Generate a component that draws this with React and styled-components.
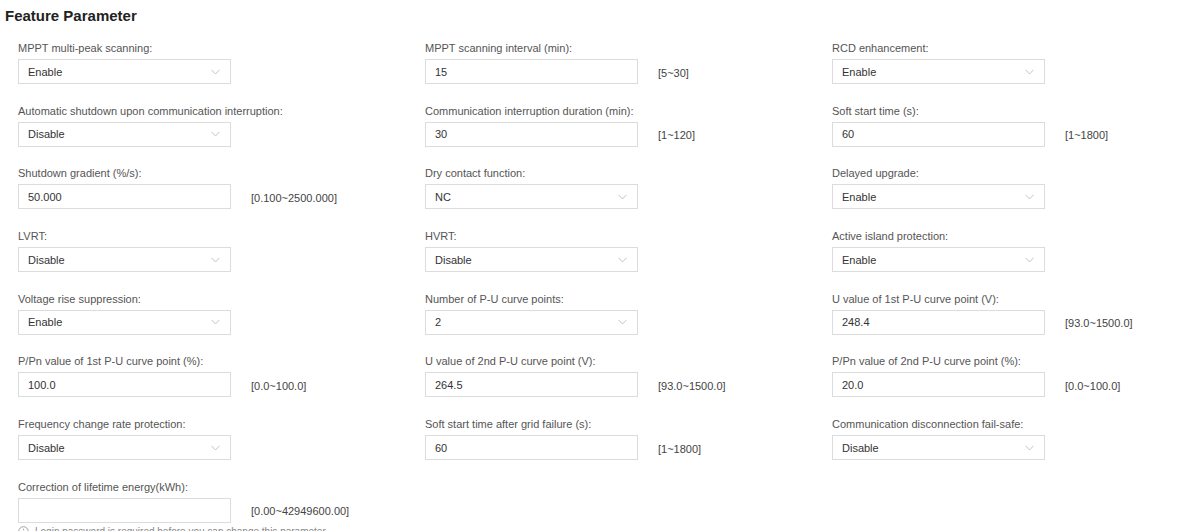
import React from 'react';
import styled, { createGlobalStyle } from 'styled-components';

const GlobalStyle = createGlobalStyle`
  html, body {
    margin: 0;
    padding: 0;
    background: #fff;
    font-family: "Liberation Sans", Arial, sans-serif;
    color: #333;
    overflow: hidden;
  }
`;

const Page = styled.div`
  width: 1200px;
  height: 531px;
  overflow: hidden;
`;

const Title = styled.h2`
  margin: 0;
  padding: 6px 0 0 5px;
  font-size: 15px;
  line-height: 19px;
  font-weight: bold;
  color: #222;
`;

const Grid = styled.div`
  display: grid;
  grid-template-columns: repeat(3, 407px);
  padding: 16px 0 0 18px;
`;

const Field = styled.div`
  display: flex;
  flex-direction: column;
  height: 62.7px;
`;

const Label = styled.div`
  font-size: 11px;
  line-height: 14px;
  color: #555;
  margin-bottom: 4px;
`;

const Row = styled.div`
  display: flex;
  align-items: center;
  gap: 20px;
`;

const Box = styled.div`
  box-sizing: border-box;
  width: 213px;
  height: 25px;
  border: 1px solid #dcdcdc;
  display: flex;
  align-items: center;
  justify-content: space-between;
  padding: 0 10px 0 9px;
  font-size: 11px;
  color: #333;
  background: #fff;
`;

const Range = styled.span`
  font-size: 11px;
  color: #444;
  padding-top: 2px;
`;

const Hint = styled.div`
  display: flex;
  align-items: center;
  gap: 6px;
  font-size: 10px;
  color: #888;
  margin-top: 3px;
`;

const Chevron = () => (
  <svg width="9" height="6" viewBox="0 0 9 6" fill="none">
    <path d="M0.5 0.8 L4.5 5 L8.5 0.8" stroke="#c4c4c4" strokeWidth="1" />
  </svg>
);

const fields = [
  { label: 'MPPT multi-peak scanning:', value: 'Enable', select: true },
  { label: 'MPPT scanning interval (min):', value: '15', range: '[5~30]' },
  { label: 'RCD enhancement:', value: 'Enable', select: true },
  { label: 'Automatic shutdown upon communication interruption:', value: 'Disable', select: true },
  { label: 'Communication interruption duration (min):', value: '30', range: '[1~120]' },
  { label: 'Soft start time (s):', value: '60', range: '[1~1800]' },
  { label: 'Shutdown gradient (%/s):', value: '50.000', range: '[0.100~2500.000]' },
  { label: 'Dry contact function:', value: 'NC', select: true },
  { label: 'Delayed upgrade:', value: 'Enable', select: true },
  { label: 'LVRT:', value: 'Disable', select: true },
  { label: 'HVRT:', value: 'Disable', select: true },
  { label: 'Active island protection:', value: 'Enable', select: true },
  { label: 'Voltage rise suppression:', value: 'Enable', select: true },
  { label: 'Number of P-U curve points:', value: '2', select: true },
  { label: 'U value of 1st P-U curve point (V):', value: '248.4', range: '[93.0~1500.0]' },
  { label: 'P/Pn value of 1st P-U curve point (%):', value: '100.0', range: '[0.0~100.0]' },
  { label: 'U value of 2nd P-U curve point (V):', value: '264.5', range: '[93.0~1500.0]' },
  { label: 'P/Pn value of 2nd P-U curve point (%):', value: '20.0', range: '[0.0~100.0]' },
  { label: 'Frequency change rate protection:', value: 'Disable', select: true },
  { label: 'Soft start time after grid failure (s):', value: '60', range: '[1~1800]' },
  { label: 'Communication disconnection fail-safe:', value: 'Disable', select: true },
  { label: 'Correction of lifetime energy(kWh):', value: '', range: '[0.00~42949600.00]', hint: true },
];

function InfoIcon() {
  return (
    <svg width="11" height="11" viewBox="0 0 11 11" fill="none">
      <circle cx="5.5" cy="5.5" r="4.8" stroke="#999" strokeWidth="0.9" />
      <path d="M5.5 4.8 V8" stroke="#999" strokeWidth="1" />
      <circle cx="5.5" cy="3.2" r="0.6" fill="#999" />
    </svg>
  );
}

function ParamField({ field }) {
  return (
    <Field>
      <Label>{field.label}</Label>
      <Row>
        <Box>
          <span>{field.value}</span>
          {field.select && <Chevron />}
        </Box>
        {field.range && <Range>{field.range}</Range>}
      </Row>
      {field.hint && (
        <Hint>
          <InfoIcon />
          <span>Login password is required before you can change this parameter.</span>
        </Hint>
      )}
    </Field>
  );
}

export default function App() {
  return (
    <Page>
      <GlobalStyle />
      <Title>Feature Parameter</Title>
      <Grid>
        {fields.map((field) => (
          <ParamField key={field.label} field={field} />
        ))}
      </Grid>
    </Page>
  );
}
